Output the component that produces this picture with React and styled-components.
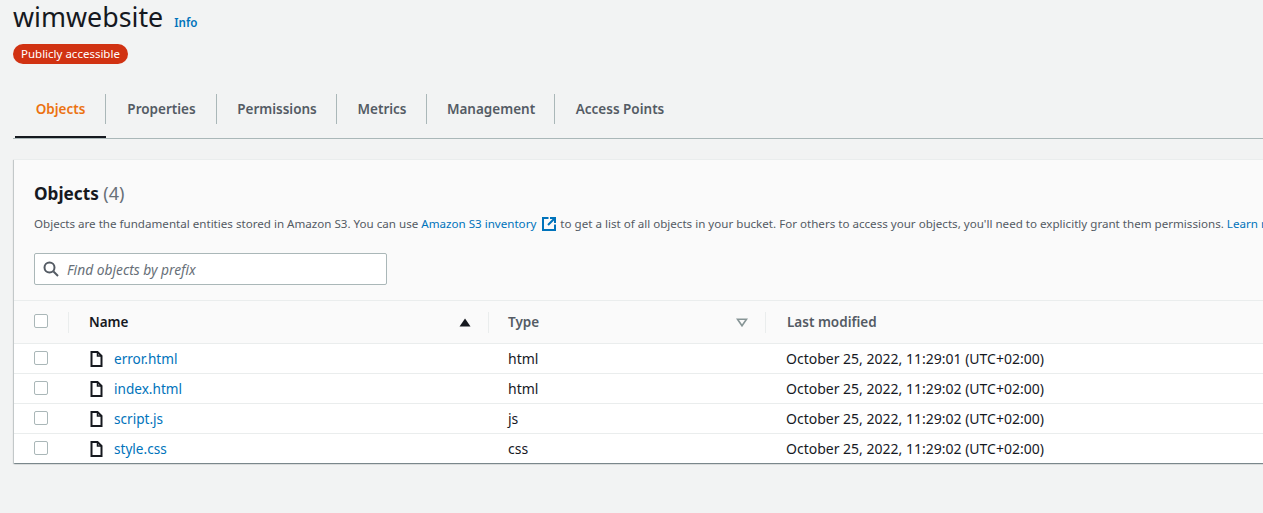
import React from "react";
import styled, { createGlobalStyle } from "styled-components";

const GlobalStyle = createGlobalStyle`
  html, body {
    margin: 0;
    padding: 0;
    height: 100%;
    overflow: hidden;
    background: #f2f3f3;
    font-family: "Noto Sans", "Liberation Sans", sans-serif;
    color: #16191f;
  }
`;

const Page = styled.div`
  width: 1263px;
  height: 513px;
  overflow: hidden;
  padding-left: 13px;
  box-sizing: border-box;
`;

const TitleRow = styled.div`
  display: flex;
  align-items: baseline;
  height: 36px;
  gap: 11px;
`;

const Title = styled.h1`
  margin: 0;
  font-size: 26.8px;
  line-height: 34px;
  font-weight: 400;
  color: #16191f;
`;

const InfoLink = styled.a`
  font-size: 11.6px;
  font-weight: 600;
  color: #0073bb;
`;

const Badge = styled.span`
  display: inline-block;
  margin-top: 8px;
  height: 20px;
  line-height: 20px;
  padding: 0 8px;
  border-radius: 10px;
  background: #d13212;
  color: #fff;
  font-size: 11.5px;
`;

const Tabs = styled.div`
  display: flex;
  margin-top: 26px;
  height: 44px;
  padding: 4px 0 0 2px;
  border-bottom: 1px solid #aab7b8;
  width: 1400px;
`;

const Tab = styled.div`
  position: relative;
  width: ${(p) => p.$width}px;
  height: 42px;
  text-align: center;
  font-size: 13.5px;
  font-weight: 600;
  line-height: 30px;
  white-space: nowrap;
  color: ${(p) => (p.$active ? "#ec7211" : "#545b64")};
  border-bottom: 2px solid ${(p) => (p.$active ? "#16191f" : "transparent")};

  &:not(:last-child)::after {
    content: "";
    position: absolute;
    right: 0;
    top: 0;
    height: 30px;
    width: 1px;
    background: #aab7b8;
  }
`;

const Card = styled.section`
  margin-top: 20px;
  margin-left: 1px;
  width: 1400px;
  background: #fff;
  border-top: 1px solid #eaeded;
  box-shadow: 0 1px 1px 0 rgba(0, 28, 36, 0.3), 1px 1px 1px 0 rgba(0, 28, 36, 0.15),
    -1px 1px 1px 0 rgba(0, 28, 36, 0.15);
`;

const CardHeader = styled.header`
  background: #fafafa;
  padding: 21px 0 15px 20px;
  height: 141px;
  box-sizing: border-box;
  border-bottom: 1px solid #eaeded;
`;

const Heading = styled.h2`
  margin: 0;
  font-size: 17.2px;
  line-height: 24px;
  font-weight: 700;
  color: #16191f;

  span {
    font-size: 18px;
    font-weight: 400;
    color: #687078;
  }
`;

const Description = styled.p`
  margin: 9px 0 0;
  font-size: 11.6px;
  line-height: 18px;
  color: #545b64;
  white-space: nowrap;
`;

const BlueLink = styled.a`
  color: #0073bb;
  font-size: ${(p) => p.$size || "inherit"};
`;

const ExternalIcon = styled.svg`
  width: 14px;
  height: 14px;
  margin: 0 4px 0 6px;
  vertical-align: -3px;
`;

const Search = styled.div`
  margin-top: 20px;
  width: 353px;
  height: 32px;
  box-sizing: border-box;
  background: #fff;
  border: 1px solid #aab7b8;
  border-radius: 2px;
  display: flex;
  align-items: center;
  padding-left: 8px;
  gap: 8px;
  font-size: 13.8px;
  font-style: italic;
  color: #687078;
`;

const HeadRow = styled.div`
  display: grid;
  grid-template-columns: 54px 420px 277px 1fr;
  height: 43px;
  box-sizing: border-box;
  background: #fafafa;
  border-bottom: 1px solid #eaeded;
  align-items: center;
`;

const Row = styled.div`
  display: grid;
  grid-template-columns: 54px 420px 277px 1fr;
  height: 30px;
  box-sizing: border-box;
  align-items: center;
  font-size: 14px;
  color: #16191f;
  border-bottom: 1px solid #eaeded;

  &:last-child {
    height: 29px;
    border-bottom: 0;
  }
`;

const CheckCell = styled.div`
  padding-left: 20px;
  display: flex;
  align-items: center;
`;

const Checkbox = styled.span`
  display: block;
  width: 14px;
  height: 14px;
  margin-bottom: 2px;
  box-sizing: border-box;
  background: #fff;
  border: 1px solid #aab7b8;
  border-radius: 2px;
`;

const HeadCell = styled.div`
  position: relative;
  display: flex;
  align-items: center;
  justify-content: space-between;
  height: 100%;
  padding: 0 17px 0 ${(p) => p.$pad || 20}px;
  font-size: 13.5px;
  font-weight: 600;
  color: ${(p) => (p.$sorted ? "#16191f" : "#545b64")};

  &::before {
    content: "";
    position: absolute;
    left: 0;
    top: 11px;
    height: 21px;
    width: 1px;
    background: #eaeded;
  }
`;

const Cell = styled.div`
  display: flex;
  align-items: center;
  gap: 9px;
  padding-left: ${(p) => p.$pad || 20}px;
`;

const Caret = styled.svg`
  width: 12px;
  height: 9px;
  flex: none;
`;

const FileIcon = styled.svg`
  width: 16px;
  height: 16px;
  flex: none;
`;

const tabs = [
  { label: "Objects", width: 91 },
  { label: "Properties", width: 111 },
  { label: "Permissions", width: 120 },
  { label: "Metrics", width: 90 },
  { label: "Management", width: 128 },
  { label: "Access Points", width: 130 },
];

const files = [
  { name: "error.html", type: "html", modified: "October 25, 2022, 11:29:01 (UTC+02:00)" },
  { name: "index.html", type: "html", modified: "October 25, 2022, 11:29:02 (UTC+02:00)" },
  { name: "script.js", type: "js", modified: "October 25, 2022, 11:29:02 (UTC+02:00)" },
  { name: "style.css", type: "css", modified: "October 25, 2022, 11:29:02 (UTC+02:00)" },
];

const App = () => {
  return (
    <Page>
      <GlobalStyle />
      <TitleRow>
        <Title>wimwebsite</Title>
        <InfoLink>Info</InfoLink>
      </TitleRow>
      <Badge>Publicly accessible</Badge>
      <Tabs>
        {tabs.map((t, i) => (
          <Tab key={t.label} $active={i === 0} $width={t.width}>
            {t.label}
          </Tab>
        ))}
      </Tabs>
      <Card>
        <CardHeader>
          <Heading>
            Objects <span>(4)</span>
          </Heading>
          <Description>
            Objects are the fundamental entities stored in Amazon S3. You can use{" "}
            <BlueLink>Amazon S3 inventory</BlueLink>
            <ExternalIcon viewBox="0 0 14 14" fill="none">
              <path d="M6.5 1H1v12h12V7.5" stroke="#0073bb" strokeWidth="2" />
              <path d="M8 1h5v5M12.5 1.5L6 8" stroke="#0073bb" strokeWidth="2" />
            </ExternalIcon>
            to get a list of all objects in your bucket. For others to access your objects, you'll need to
            explicitly grant them permissions. <BlueLink>Learn more</BlueLink>
          </Description>
          <Search>
            <svg width="16" height="16" viewBox="0 0 16 16" fill="none">
              <circle cx="6.5" cy="6.5" r="5" stroke="#545b64" strokeWidth="2" />
              <path d="M10.5 10.5L15 15" stroke="#545b64" strokeWidth="2" />
            </svg>
            Find objects by prefix
          </Search>
        </CardHeader>
        <HeadRow>
          <CheckCell>
            <Checkbox />
          </CheckCell>
          <HeadCell $sorted $pad={21}>
            Name
            <Caret viewBox="0 0 12 9">
              <path d="M6 0.5L11.5 8.5H0.5z" fill="#16191f" />
            </Caret>
          </HeadCell>
          <HeadCell>
            Type
            <Caret viewBox="0 0 12 9">
              <path d="M1.5 1.2h9L6 7.8z" fill="none" stroke="#879596" strokeWidth="1.6" />
            </Caret>
          </HeadCell>
          <HeadCell $pad={22}>Last modified</HeadCell>
        </HeadRow>
        {files.map((f) => (
          <Row key={f.name}>
            <CheckCell>
              <Checkbox />
            </CheckCell>
            <Cell $pad={21}>
              <FileIcon viewBox="0 0 16 16" fill="none">
                <path d="M2.5 1h6l4 4v10h-10z" stroke="#16191f" strokeWidth="2" />
                <path d="M8.5 1v4h4" stroke="#16191f" strokeWidth="1.5" />
              </FileIcon>
              <BlueLink $size="13.6px">{f.name}</BlueLink>
            </Cell>
            <Cell>{f.type}</Cell>
            <Cell $pad={21}>{f.modified}</Cell>
          </Row>
        ))}
      </Card>
    </Page>
  );
};

export default App;
